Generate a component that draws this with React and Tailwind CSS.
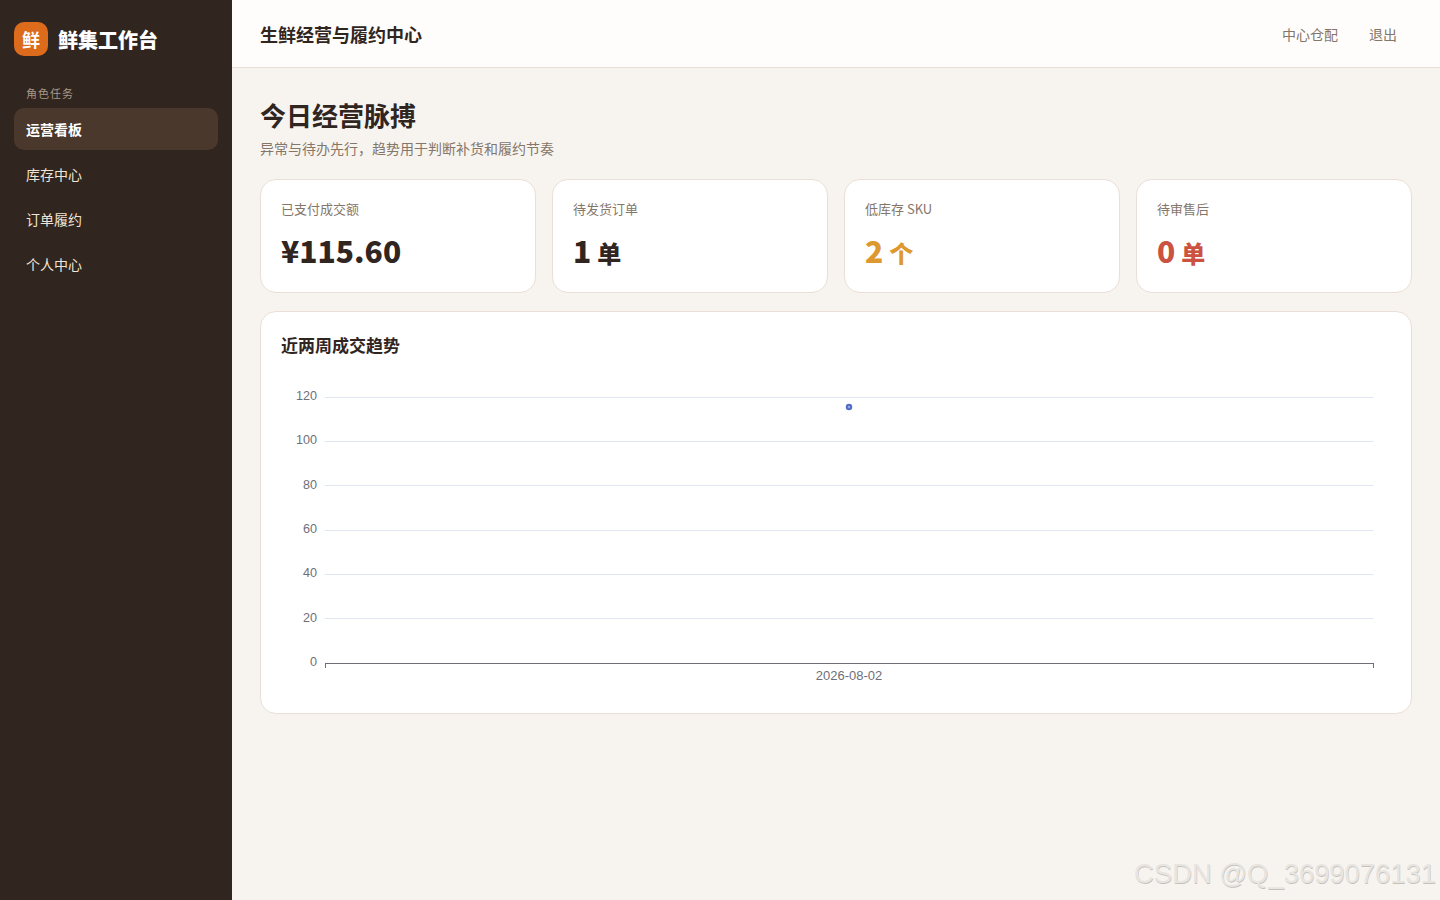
const navItems = ['运营看板', '库存中心', '订单履约', '个人中心'];

const stats = [
  { label: '已支付成交额', value: '¥115.60', color: 'text-[#30251f]' },
  { label: '待发货订单', value: '1', unit: '单', color: 'text-[#30251f]' },
  { label: '低库存 SKU', value: '2', unit: '个', color: 'text-[#dd982f]' },
  { label: '待审售后', value: '0', unit: '单', color: 'text-[#cb5240]' },
];

const ticks = [
  { label: '120', y: 397.5, labelY: 400 },
  { label: '100', y: 441.5, labelY: 444 },
  { label: '80', y: 485.5, labelY: 489 },
  { label: '60', y: 530.5, labelY: 533 },
  { label: '40', y: 574.5, labelY: 577 },
  { label: '20', y: 618.5, labelY: 622 },
];

// svg origin sits at page x=261 y=380, inside the card border
function TrendChart() {
  return (
    <svg width="1150" height="310" viewBox="261 380 1150 310" className="block">
      {ticks.map(t => (
        <g key={t.label}>
          <line x1="325" x2="1373.5" y1={t.y} y2={t.y} stroke="#e0e6f1" />
          <text x="317" y={t.labelY} textAnchor="end" fontSize="12.6" fill="#6e7079" fontFamily="'Liberation Sans', sans-serif">{t.label}</text>
        </g>
      ))}
      <text x="317" y="666" textAnchor="end" fontSize="12.6" fill="#6e7079" fontFamily="'Liberation Sans', sans-serif">0</text>
      <line x1="325" x2="1374" y1="663.5" y2="663.5" stroke="#6e7079" />
      <line x1="325.5" x2="325.5" y1="663" y2="668" stroke="#6e7079" />
      <line x1="1373.5" x2="1373.5" y1="663" y2="668" stroke="#6e7079" />
      <text x="849" y="680" textAnchor="middle" fontSize="13" fill="#6e7079" fontFamily="'Liberation Sans', sans-serif">2026-08-02</text>
      <circle cx="849" cy="407" r="2" fill="#fff" stroke="#5470c6" strokeWidth="2.5" />
    </svg>
  );
}

export default function App() {
  return (
    <div className="relative flex min-h-[900px] bg-[#f7f4f0] font-['Noto_Sans_CJK_SC','Noto_Sans',sans-serif] text-[#30251f]">
      <aside className="w-[232px] shrink-0 bg-[#30251f] px-[14px] pt-[22px]">
        <div className="flex items-start gap-[10px]">
          <div className="flex h-[34px] w-[34px] items-center justify-center rounded-[10px] bg-[#dd6b1c] text-[18px] font-bold text-white">鲜</div>
          <div className="text-[20px] leading-[36px] font-black text-white">鲜集工作台</div>
        </div>
        <div className="mt-[26px] px-3 text-[11px] leading-[18px] tracking-[1px] text-[#a89888]">角色任务</div>
        <nav className="mt-[6px] flex flex-col gap-[3px]">
          {navItems.map((item, i) => (
            <div
              key={item}
              className={i === 0
                ? 'h-[42px] rounded-[10px] bg-[#4a382c] px-3 text-sm leading-[42px] font-semibold text-white'
                : 'h-[42px] rounded-[10px] px-3 text-sm leading-[42px] text-[#f0e4d6]'}
            >
              {item}
            </div>
          ))}
        </nav>
      </aside>

      <div className="min-w-0 flex-1">
        <header className="flex h-[68px] items-center justify-between border-b border-[#eadfd6] bg-[#fffdfb] pr-[43px] pl-[28px]">
          <div className="pt-[2px] text-[18px] font-bold">生鲜经营与履约中心</div>
          <div className="flex items-center gap-[31px] text-sm text-[#85766a]">
            <span>中心仓配</span>
            <span>退出</span>
          </div>
        </header>

        <main className="px-[28px] pt-[27px]">
          <h1 className="text-[26px] leading-[40px] font-bold">今日经营脉搏</h1>
          <p className="mt-[3px] text-sm leading-[20px] text-[#85766a]">异常与待办先行，趋势用于判断补货和履约节奏</p>

          <div className="mt-[21px] grid grid-cols-4 gap-4">
            {stats.map(s => (
              <div key={s.label} className="h-[114px] rounded-[16px] border border-[#eadfd6] bg-white px-5 pt-[20px]">
                <div className="text-[13px] leading-[18px] text-[#85766a]">{s.label}</div>
                <div className={`mt-[10px] text-[30px] leading-[44px] font-black ${s.color}`}>
                  {s.value}
                  {s.unit && <span className="ml-[6px] text-[24px]">{s.unit}</span>}
                </div>
              </div>
            ))}
          </div>

          <section className="mt-[18px] h-[403px] rounded-[16px] border border-[#eadfd6] bg-white">
            <h2 className="px-5 pt-[19px] text-[17px] leading-[28px] font-bold">近两周成交趋势</h2>
            <div className="mt-[21px]">
              <TrendChart />
            </div>
          </section>
        </main>
      </div>

      <div className="absolute right-[4px] bottom-[8px] font-['Liberation_Sans',sans-serif] text-[27.4px] leading-[36px] text-[#e8e5e1] [text-shadow:0.5px_0.5px_0.5px_#c4c1bd]">CSDN @Q_3699076131</div>
    </div>
  );
}
